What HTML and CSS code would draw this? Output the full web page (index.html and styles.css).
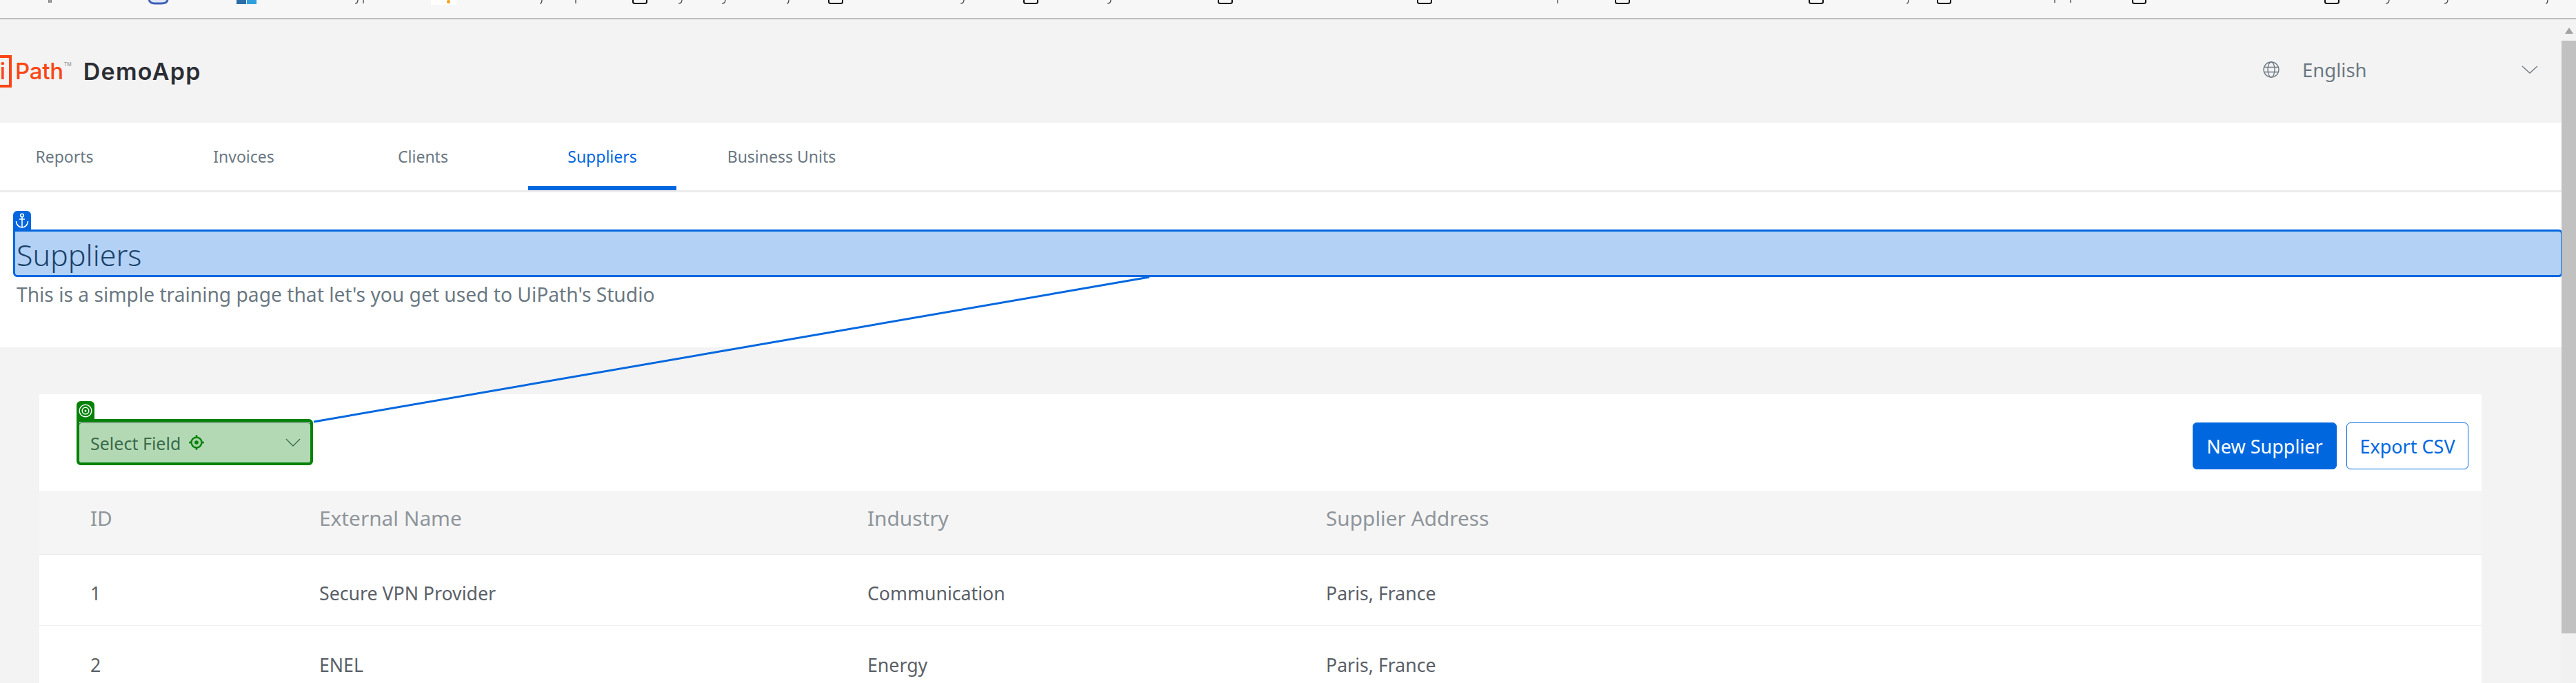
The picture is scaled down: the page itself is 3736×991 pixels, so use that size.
FILE: index.html
```html
<!DOCTYPE html>
<html lang="en">
<head>
<meta charset="utf-8">
<title>Suppliers - DemoApp</title>
<link rel="stylesheet" href="styles.css">
</head>
<body>
<div class="bookmarks">
  <svg class="bookmarks-art" width="3736" height="26" viewBox="0 0 3736 26" aria-hidden="true">
    <g fill="none" stroke="#333" stroke-width="1.2">
      <path d="M71 0v4M74 0v4M519 0c0 3-1 5-4 5M527 0v5M786 0c0 3-1 5-3 5M835 0v5M989 0c0 3-2 5-5 5M1052 0c0 3-2 5-5 5M1144 0c0 3-1 5-3 5M1398 0c0 3-2 5-5 5M1611 0c0 3-2 5-5 5M2259 0v5M2768 0c0 3-1 5-3 5M2980 0v4M3003 0v4M3465 0c0 3-2 5-5 5M3550 0c0 3-2 5-5 5M3695 0c0 3-1 5-3 5"/>
    </g>
    <g fill="none" stroke="#111" stroke-width="2">
      <path d="M918 0v3q0 2 3 2h14q3 0 3-2V0M1202 0v3q0 2 3 2h14q3 0 3-2V0M1485 0v3q0 2 3 2h14q3 0 3-2V0M1767 0v3q0 2 3 2h14q3 0 3-2V0M2056 0v3q0 2 3 2h14q3 0 3-2V0M2343 0v3q0 2 3 2h14q3 0 3-2V0M2624 0v3q0 2 3 2h14q3 0 3-2V0M2810 0v3q0 2 3 2h13q3 0 3-2V0M3093 0v3q0 2 3 2h13q3 0 3-2V0M3372 0v3q0 2 3 2h14q3 0 3-2V0"/>
    </g>
    <path d="M216 0q2 5 8 5h10q8 0 9-5" fill="#dfe6f5" stroke="#3f5fb8" stroke-width="3"/>
    <rect x="343" y="0" width="14" height="6" fill="#2a6da8"/>
    <rect x="358" y="0" width="14" height="6" fill="#2f9fe0"/>
    <rect x="625" y="0" width="37" height="7" fill="#fff"/>
    <rect x="648" y="0" width="5" height="5" rx="2" fill="#f5a623"/>
  </svg>
</div>
<div class="shell">
  <main class="page">
    <header class="topbar">
      <div class="brand">
        <span class="logo"><span class="logo-box">Ui</span><span class="logo-path">Path</span><sup class="logo-tm">TM</sup></span>
        <span class="app-name">DemoApp</span>
      </div>
      <div class="lang">
        <svg class="globe" width="24" height="24" viewBox="0 0 24 24" fill="none" stroke="#6b7882" stroke-width="1.3"><circle cx="12" cy="12" r="11"/><ellipse cx="12" cy="12" rx="5" ry="11"/><path d="M1 8.500h22M1 15.500h22"/></svg>
        <span class="lang-name">English</span>
        <svg class="lang-chev" width="24" height="12" viewBox="0 0 24 12" fill="none" stroke="#6b7882" stroke-width="1.3"><path d="M1 1l11 10L23 1"/></svg>
      </div>
    </header>
    <nav class="tabs">
      <a class="tab">Reports</a>
      <a class="tab">Invoices</a>
      <a class="tab">Clients</a>
      <a class="tab tab-active">Suppliers</a>
      <a class="tab">Business Units</a>
    </nav>
    <section class="intro">
      <h1 class="title">Suppliers
        <span class="hl hl-anchor">
          <span class="hl-tag hl-tag-blue">
            <svg width="20" height="22" viewBox="0 0 20 22" fill="none" stroke="#fff" stroke-width="1.6"><circle cx="10" cy="3.500" r="2.300"/><path d="M10 6v15M6 9h8M1.500 12c0 5 4 9 8.500 9s8.500-4 8.500-9"/></svg>
          </span>
        </span>
      </h1>
      <p class="subtitle">This is a simple training page that let's you get used to UiPath's Studio</p>
    </section>
    <section class="content">
      <div class="card">
        <div class="toolbar">
          <div class="select">
            <span class="select-label">Select Field</span>
            <svg class="select-target" width="22" height="22" viewBox="0 0 22 22" fill="none" stroke="#038108" stroke-width="2.400"><circle cx="11" cy="11" r="7.500" fill="#eef6ee"/><circle cx="11" cy="11" r="2.800" fill="#038108" stroke="none"/><path d="M11 0v4M11 18v4M0 11h4M18 11h4"/></svg>
            <svg class="select-chev" width="22" height="12" viewBox="0 0 22 12" fill="none" stroke="#526069" stroke-width="1.3"><path d="M1 1l10 10L21 1"/></svg>
            <span class="hl hl-target">
              <span class="hl-tag hl-tag-green">
                <svg width="20" height="20" viewBox="0 0 20 20" fill="none" stroke="#fff" stroke-width="1.4"><circle cx="10" cy="10" r="8.800"/><circle cx="10" cy="10" r="4.800"/><circle cx="10" cy="10" r="1.500" fill="#fff" stroke="none"/></svg>
              </span>
            </span>
          </div>
          <div class="actions">
            <button class="btn btn-primary">New Supplier</button>
            <button class="btn btn-outline">Export CSV</button>
          </div>
        </div>
        <table class="grid">
          <colgroup><col class="col-id"><col class="col-name"><col class="col-industry"><col class="col-address"></colgroup>
          <thead>
            <tr><th>ID</th><th>External Name</th><th>Industry</th><th>Supplier Address</th></tr>
          </thead>
          <tbody>
            <tr><td>1</td><td>Secure VPN Provider</td><td>Communication</td><td>Paris, France</td></tr>
            <tr><td>2</td><td>ENEL</td><td>Energy</td><td>Paris, France</td></tr>
          </tbody>
        </table>
      </div>
    </section>
  </main>
  <aside class="scrollbar" aria-hidden="true">
    <div class="scroll-up"><span class="scroll-arrow"></span></div>
    <div class="scroll-thumb"></div>
  </aside>
</div>
<svg class="link-line" width="3736" height="991" viewBox="0 0 3736 991" aria-hidden="true">
  <line x1="455" y1="612" x2="1667" y2="402" stroke="#0067df" stroke-width="3"/>
</svg>
</body>
</html>
```
FILE: styles.css
```css
* { box-sizing: border-box; }
html, body { margin: 0; height: 100%; overflow: hidden; }
body { font-family: "Noto Sans", sans-serif; background: #fff; color: #273139; position: relative; }

.bookmarks { height: 28px; background: #f7f7f7; border-bottom: 2px solid #bdbdbd; overflow: hidden; }
.bookmarks-art { display: block; }

.shell { display: flex; height: calc(100vh - 28px); }
.page { flex: 1; min-width: 0; background: #f3f3f3; overflow: hidden; }

.scrollbar { width: 21px; display: flex; flex-direction: column; background: #f1f1f1; }
.scroll-up { height: 31px; display: flex; justify-content: center; padding-top: 12px; background: #f3f3f3; }
.scroll-arrow { width: 0; height: 0; border-left: 6px solid transparent; border-right: 6px solid transparent; border-bottom: 9px solid #a3a3a3; }
.scroll-thumb { height: 860px; background: #c1c1c1; }

.topbar { height: 150px; display: flex; justify-content: space-between; align-items: center; background: #f3f3f3; }
.brand { display: flex; align-items: center; gap: 17px; overflow: hidden; }
.logo { display: flex; align-items: center; color: #fa4616; font-family: "Inter", sans-serif; font-weight: 500; font-size: 33px; line-height: 1; }
.logo-box { width: 60px; height: 47px; margin-left: -43px; border: 4px solid #fa4616; display: flex; align-items: center; justify-content: flex-end; padding-right: 5px; }
.logo-path { margin-left: 5px; letter-spacing: -0.3px; }
.logo-tm { font-size: 7px; align-self: flex-start; margin: 10px 0 0 1px; color: #999; }
.app-name { font-family: "Inter", sans-serif; font-weight: 600; font-size: 34px; letter-spacing: 1.3px; color: #2b2d33; }

.lang { display: flex; align-items: center; padding-bottom: 4px; }
.globe { margin-right: 33px; }
.lang-name { font-size: 27.5px; color: #6b7882; width: 318px; }
.lang-chev { margin-right: 34px; }

.tabs { height: 101px; display: flex; gap: 45px; background: #fff; border-bottom: 3px solid #ececec; }
.tab { width: 215px; flex: none; height: 98px; display: flex; align-items: center; justify-content: center; font-size: 23px; color: #6b7882; }
.tab:first-child { margin-left: -14px; }
.tab-active { color: #0067df; border-bottom: 6px solid #0067df; border-radius: 3px 3px 0 0; padding-top: 6px; }

.intro { height: 225px; background: #fff; padding: 54px 0 0 24px; }
.title { position: relative; margin: 0; height: 69px; font-size: 43px; font-weight: 300; line-height: 74px; color: #273139; }
.subtitle { margin: 5px 0 0; font-size: 28.2px; line-height: 40px; color: #6b7882; }

.hl { position: absolute; border-style: solid; border-width: 3px; border-radius: 0 6px 6px 6px; }
.hl-anchor { left: -5px; top: 0; right: -2px; bottom: 0; border-color: #0067df; background: rgba(0, 103, 223, 0.3); }
.hl-target { left: -4px; top: -6px; right: -4px; bottom: -3px; border-width: 4px; border-color: #038108; background: rgba(3, 129, 8, 0.3); }
.hl-tag { position: absolute; left: -3px; top: -30px; width: 26px; height: 27px; display: flex; align-items: center; justify-content: center; border-radius: 6px 6px 0 0; }
.hl-target .hl-tag { left: -4px; }
.hl-tag-blue { background: #0067df; }
.hl-tag-green { background: #038108; }

.content { padding: 68px 116px 0 57px; }
.card { background: #fff; }

.toolbar { height: 140px; display: flex; justify-content: space-between; padding: 41px 19px 0 57px; }
.select { position: relative; width: 337px; height: 60px; border: 1px solid #526069; border-radius: 4px; display: flex; align-items: center; padding: 0 14px 0 16px; background: #fff; }
.select-label { font-size: 25px; color: #526069; }
.select-target { margin-left: 12px; margin-bottom: 2px; }
.select-chev { margin-left: auto; margin-bottom: 2px; }

.actions { display: flex; gap: 14px; }
.btn { height: 68px; font-family: "Noto Sans", sans-serif; font-size: 27px; border-radius: 6px; padding: 0; }
.btn-primary { width: 209px; background: #0067df; border: 1px solid #0067df; color: #fff; }
.btn-outline { width: 177px; background: #fff; border: 1px solid #0067df; color: #0067df; }

.grid { width: 100%; border-collapse: collapse; table-layout: fixed; background: #fff; }
.col-id { width: 406px; }
.col-name { width: 795px; }
.col-industry { width: 665px; }
.grid th { height: 92px; text-align: left; font-size: 29.8px; font-weight: 400; color: #8f959b; background: #f5f5f5; border-bottom: 1px solid #ebebeb; padding: 0 0 12px; }
.grid td { height: 103px; font-size: 26.7px; font-weight: 400; color: #5a6067; border-bottom: 1px solid #f0f0f0; padding: 10px 0 0; }
.grid tbody tr:last-child td { padding-top: 12px; }
.grid th:first-child, .grid td:first-child { padding-left: 74px; }

.link-line { position: absolute; left: 0; top: 0; pointer-events: none; }
```
